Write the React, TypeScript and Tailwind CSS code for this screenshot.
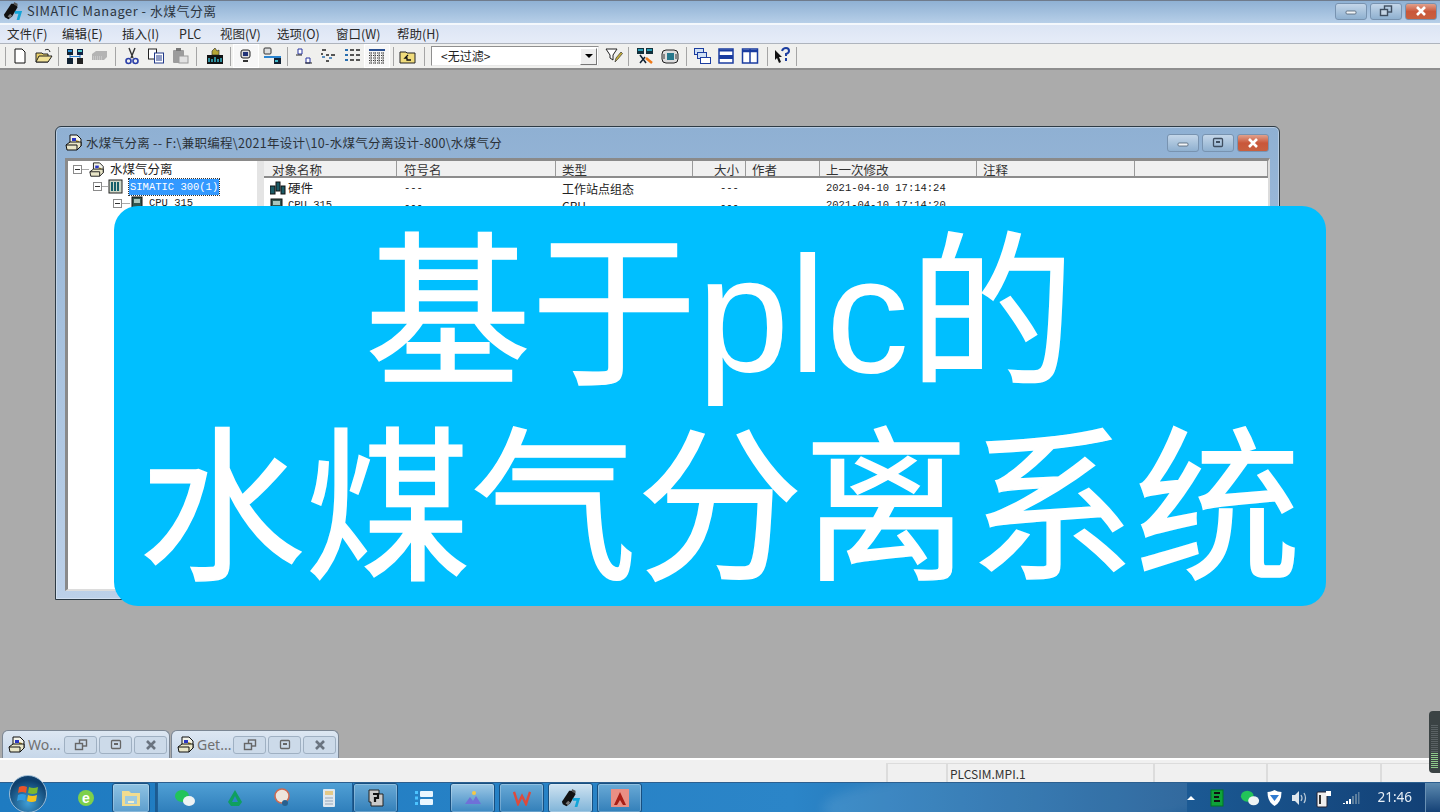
import React from "react";

const cjk = "font-['Noto_Sans_CJK_SC','Noto_Sans',sans-serif]";
const mono = "font-['Liberation_Mono','Noto_Sans_CJK_SC',monospace]";

const SimaticIcon = ({ size = 22 }: { size?: number }) => (
  <svg width={size} height={size} viewBox="0 0 22 22">
    <path d="M1 15l8-12 5 0 2 4-6 10-4 3-4-2z" fill="#111" />
    <path d="M5 17l3-3 2 2-2 3z" fill="#777" />
    <path d="M12 1l4 2 0 3-4-2z" fill="#555" />
    <path d="M13 11h8l-3 10h-3l2-7h-4z" fill="#12a5d8" />
  </svg>
);

const ProjectIcon = ({ size = 18 }: { size?: number }) => (
  <svg width={size} height={size} viewBox="0 0 18 18">
    <path d="M5 1h7l4 4v7H5z" fill="#f3f3e8" stroke="#111" />
    <path d="M7 4h4v3H7z" fill="#2a36c4" />
    <path d="M11 6l3 1v3h-3z" fill="#b99a30" />
    <path d="M1 11l4-3h11v4l-4 4H2z" fill="#e9e6c8" stroke="#111" />
    <path d="M1 11h11v5" fill="none" stroke="#111" />
  </svg>
);

const WinBtn = ({ kind, cls, icon = "#3f4e60" }: { kind: "min" | "max" | "rest" | "close"; cls: string; icon?: string }) => {
  const isClose = kind === "close";
  return (
    <div
      className={`flex items-center justify-center rounded-[3px] border border-[#7893b0] ${cls} ${
        isClose ? "bg-gradient-to-b from-[#e0a08c] via-[#c9573a] to-[#c8603f]" : "bg-gradient-to-b from-[#c4d6e9] via-[#a9c3dc] to-[#8fb0d0]"
      }`}
    >
      <svg width="16" height="12" viewBox="0 0 16 12">
        {kind === "min" && <rect x="3" y="6" width="10" height="3" rx="1" fill="#f2f5f8" stroke="#4d5d70" strokeWidth="0.8" />}
        {kind === "max" && (
          <g fill="none" stroke={icon} strokeWidth="1.300">
            <rect x="3.500" y="1.500" width="9" height="8" rx="1" />
            <path d="M6 5h4" strokeWidth="2" />
          </g>
        )}
        {kind === "rest" && (
          <g fill="none" stroke={icon} strokeWidth="1.400">
            <rect x="6.500" y="1" width="7" height="6" />
            <rect x="2.500" y="4.500" width="7" height="6" fill="#c5d5e5" />
          </g>
        )}
        {isClose && <path d="M4 2l8 8M12 2l-8 8" stroke={icon === "#3f4e60" ? "#fff" : icon} strokeWidth="2.600" />}
      </svg>
    </div>
  );
};

const Sep = ({ cls = "" }: { cls?: string }) => <div className={`h-[19px] w-px shrink-0 bg-[#a5a5a5] ${cls}`} />;

const TBtn = ({ w = "w-[24px]", pressed, children }: { w?: string; pressed?: boolean; children: React.ReactNode }) => (
  <div className={`flex h-[24px] shrink-0 items-center justify-center ${w} ${pressed ? "border border-white bg-[#f7f7f7]" : ""}`}>{children}</div>
);

const I = ({ children }: { children: React.ReactNode }) => (
  <svg width="18" height="18" viewBox="0 0 18 18">
    {children}
  </svg>
);

const Toolbar = () => (
  <div className="flex h-[26px] shrink-0 items-center border-b-2 border-[#8e8e8e] bg-[#f0f0ee]">
    <Sep cls="ml-[5px] mr-[2px]" />
    <TBtn>
      <I><path d="M4 2h7l3 3v11H4z" fill="#fff" stroke="#111" /></I>
    </TBtn>
    <TBtn>
      <I>
        <path d="M1 6h6l1 1h5v8H1z" fill="#e8cf6a" stroke="#222" />
        <path d="M4 9h13l-4 6H1z" fill="#f2e296" stroke="#222" />
        <path d="M10 3q4-2 5 2" fill="none" stroke="#222" />
      </I>
    </TBtn>
    <Sep cls="ml-[2px] mr-[3px]" />
    <TBtn w="w-[25px]">
      <I>
        <rect x="1" y="2" width="6" height="6" fill="#123" /><rect x="11" y="2" width="6" height="6" fill="#124" />
        <rect x="1" y="11" width="6" height="6" fill="#123" /><rect x="11" y="11" width="6" height="6" fill="#222" />
        <rect x="2" y="3" width="4" height="2" fill="#2a8fd0" /><rect x="12" y="3" width="4" height="2" fill="#5cc" />
        <path d="M4 8v3M14 8v3M4 9.500h10" stroke="#2a7fd0" fill="none" />
      </I>
    </TBtn>
    <TBtn>
      <I>
        <path d="M2 7l4-3h11v6l-3 3H2z" fill="#b4b4b4" />
        <path d="M3 10h10M3 12h10" stroke="#dadada" strokeDasharray="1 1" />
      </I>
    </TBtn>
    <Sep cls="ml-[4px] mr-[4px]" />
    <TBtn>
      <I>
        <path d="M6 1l4 10M12 1L8 11" stroke="#333" strokeWidth="1.400" fill="none" />
        <circle cx="5.500" cy="14" r="2.500" fill="none" stroke="#2b3fa8" strokeWidth="1.600" />
        <circle cx="12.500" cy="14" r="2.500" fill="none" stroke="#2b3fa8" strokeWidth="1.600" />
      </I>
    </TBtn>
    <TBtn>
      <I>
        <rect x="1.500" y="2" width="8" height="10" fill="#fff" stroke="#222" />
        <rect x="7.500" y="6" width="9" height="10" fill="#fff" stroke="#223a8a" />
        <path d="M9 9h6M9 11h6M9 13h6" stroke="#223a8a" />
      </I>
    </TBtn>
    <TBtn>
      <I>
        <rect x="2" y="3" width="11" height="13" rx="1" fill="#9c9c9c" />
        <rect x="5" y="1" width="5" height="3" fill="#777" />
        <rect x="8" y="9" width="9" height="7" fill="#e2e2e2" stroke="#9a9a9a" />
      </I>
    </TBtn>
    <Sep cls="ml-[4px] mr-[5px]" />
    <TBtn w="w-[25px]">
      <I>
        <rect x="1" y="8" width="16" height="9" fill="#111" />
        <path d="M9 1l2 3 2-1v5H6V4z" fill="#b6a636" stroke="#222" strokeWidth="0.600" />
        <path d="M3 15v-4M6 15v-3M9 15v-5M12 15v-3M15 15v-4" stroke="#38b6c9" strokeWidth="1.500" />
      </I>
    </TBtn>
    <Sep cls="ml-[3px] mr-[2px]" />
    <TBtn w="w-[26px]" pressed>
      <I>
        <rect x="4" y="3" width="9" height="8" rx="2" fill="#ddd" stroke="#222" />
        <rect x="6" y="5" width="5" height="4" fill="#237" />
        <path d="M6 14h5" stroke="#333" strokeWidth="2" />
      </I>
    </TBtn>
    <TBtn w="w-[26px]">
      <I>
        <rect x="1" y="1" width="7" height="6" rx="1" fill="#ddd" stroke="#333" />
        <path d="M1 10h17" stroke="#2a84d0" strokeWidth="2" />
        <rect x="11" y="11" width="7" height="6" fill="#123" />
        <rect x="12" y="13" width="3" height="2" fill="#4bc" />
      </I>
    </TBtn>
    <Sep cls="ml-[2px] mr-[4px]" />
    <TBtn>
      <I>
        <path d="M3 2h4v5H3zM11 11h4v5h-4z" fill="#fff" stroke="#2634a0" />
        <path d="M1 8h6M10 16h7" stroke="#222" />
      </I>
    </TBtn>
    <TBtn>
      <I>
        <path d="M3 3h2M5 3h2M7 8h3M12 8h4M7 14h3M3 6v2" stroke="#222" strokeWidth="1.500" />
        <path d="M3 10h3M10 11h3" stroke="#2a6fb0" strokeWidth="1.500" />
      </I>
    </TBtn>
    <TBtn>
      <I>
        <path d="M2 3h3M2 8h3M2 13h3" stroke="#2a6fb0" strokeWidth="2" />
        <path d="M7 3h4M13 3h4M7 8h4M13 8h4M7 13h4M13 13h4" stroke="#222" strokeWidth="1.500" />
      </I>
    </TBtn>
    <TBtn w="w-[26px]" pressed>
      <I>
        <path d="M1 3h16" stroke="#2a4f90" strokeWidth="2" />
        <path d="M1 6h16M1 8.500h16M1 11h16M1 13.500h16M1 16h16" stroke="#333" strokeDasharray="1 1" />
        <path d="M3 5v12M7 5v12M11 5v12M15 5v12" stroke="#777" />
      </I>
    </TBtn>
    <Sep cls="ml-[3px] mr-[2px]" />
    <TBtn>
      <I>
        <path d="M1 5h6l1 1h8v10H1z" fill="#f0dc7c" stroke="#222" />
        <path d="M9 8l-3 3h2v2h4" fill="none" stroke="#111" strokeWidth="1.300" />
      </I>
    </TBtn>
    <Sep cls="ml-[4px] mr-[6px]" />
    <div className={`flex h-[20px] w-[168px] shrink-0 items-center justify-between border border-[#8f8f8f] border-r-[#e8e8e8] border-b-[#e8e8e8] bg-white pl-[9px] text-[12px] text-[#222] ${cjk}`}>
      <span>&lt;无过滤&gt;</span>
      <div className="mr-px flex h-[17px] w-[17px] items-center justify-center border border-[#777] border-l-[#fff] border-t-[#fff] bg-[#eeeeee]">
        <div className="h-0 w-0 border-x-[4px] border-t-[4px] border-x-transparent border-t-black" />
      </div>
    </div>
    <TBtn w="w-[27px] ml-[1px]">
      <I>
        <path d="M1 2h11L8 8v5L5 11V8z" fill="#fff" stroke="#222" />
        <path d="M10 15l1-4 5-6 1.500 1.500-5 6z" fill="#c9b23a" stroke="#333" strokeWidth="0.700" />
      </I>
    </TBtn>
    <Sep cls="ml-[1px] mr-[3px]" />
    <TBtn w="w-[25px]">
      <I>
        <rect x="1" y="1" width="7" height="6" fill="#13303a" /><rect x="10" y="1" width="7" height="6" fill="#13303a" />
        <rect x="2" y="2" width="5" height="2" fill="#2ba0b8" /><rect x="11" y="2" width="5" height="2" fill="#2ba0b8" />
        <path d="M4 8l6 8M4 16l5-6" stroke="#123" strokeWidth="1.500" />
        <path d="M10 11l6 5" stroke="#ef7a1a" strokeWidth="2.500" />
      </I>
    </TBtn>
    <TBtn w="w-[25px]">
      <I>
        <rect x="1" y="3" width="16" height="13" rx="4" fill="#ddd" stroke="#222" />
        <rect x="6" y="6" width="7" height="7" fill="#26788c" />
        <path d="M3 7v5M15 7v5" stroke="#333" />
      </I>
    </TBtn>
    <Sep cls="ml-[4px] mr-[3px]" />
    <TBtn>
      <I>
        <rect x="1.500" y="1.500" width="9" height="6" fill="#cfe0f4" stroke="#1b3da0" />
        <rect x="4.500" y="5.500" width="9" height="6" fill="#cfe0f4" stroke="#1b3da0" />
        <rect x="7.500" y="10.500" width="10" height="6" fill="#fff" stroke="#1b3da0" />
      </I>
    </TBtn>
    <TBtn>
      <I>
        <rect x="2" y="2" width="14" height="14" fill="#fff" stroke="#1b3da0" strokeWidth="1.500" />
        <path d="M2 3.500h14M2 9h14M2 11h14" stroke="#1b3da0" strokeWidth="2" />
      </I>
    </TBtn>
    <TBtn>
      <I>
        <rect x="1.500" y="2" width="15" height="14" fill="#fff" stroke="#1b3da0" strokeWidth="1.500" />
        <path d="M1 4h16" stroke="#1b3da0" strokeWidth="2.500" />
        <path d="M9 2v14" stroke="#1b3da0" strokeWidth="1.500" />
      </I>
    </TBtn>
    <Sep cls="ml-[5px] mr-[2px]" />
    <TBtn>
      <I>
        <path d="M2 3l7 7H6l2 5-2 1-2-5-2 2z" fill="#111" />
        <path d="M9 4q1-3 4-3t3 3q0 2-3 3v2" fill="none" stroke="#1b3da0" strokeWidth="2" />
        <rect x="12" y="11" width="2" height="3" fill="#1b3da0" />
      </I>
    </TBtn>
    <Sep cls="ml-[2px]" />
  </div>
);

const Expander = () => (
  <div className="flex h-[9px] w-[9px] shrink-0 items-center justify-center border border-[#8a8a8a] bg-white">
    <div className="h-px w-[5px] bg-[#333]" />
  </div>
);

const columns = [
  { label: "对象名称", w: "w-[133px]", cls: "pl-[8px]" },
  { label: "符号名", w: "w-[159px]", cls: "pl-[7px]" },
  { label: "类型", w: "w-[137px]", cls: "pl-[6px]" },
  { label: "大小", w: "w-[53px]", cls: "pl-[21px]" },
  { label: "作者", w: "w-[74px]", cls: "pl-[6px]" },
  { label: "上一次修改", w: "w-[157px]", cls: "pl-[6px]" },
  { label: "注释", w: "w-[158px]", cls: "pl-[6px]" },
  { label: "", w: "flex-1", cls: "" },
];

const Row = ({ icon, name, type, date }: { icon: React.ReactNode; name: React.ReactNode; type: string; date: string }) => (
  <div className="flex h-[17px] items-center text-[12px] leading-none text-[#222]">
    <div className="flex w-[140px] shrink-0 items-center pl-[6px]">
      <span className="flex w-[18px] justify-start">{icon}</span>
      {name}
    </div>
    <span className={`w-[158px] shrink-0 ${mono} text-[10.500px]`}>---</span>
    <span className={`w-[158px] shrink-0 ${cjk}`}>{type}</span>
    <span className={`w-[106px] shrink-0 ${mono} text-[10.500px]`}>---</span>
    <span className={`${mono} text-[10.500px]`}>{date}</span>
  </div>
);

const ChildWindow = () => (
  <div className="absolute left-[55px] top-[56px] flex h-[474px] w-[1225px] flex-col rounded-t-[6px] border border-[#2d3a44] bg-gradient-to-b from-[#8fb0d3] via-[#a9c3df] to-[#bcd0e8] shadow-[inset_0_0_0_1px_rgba(255,255,255,0.35)]">
    <div className="flex h-[31px] shrink-0 items-center pl-[9px] pr-[10px]">
      <ProjectIcon size={18} />
      <span className={`ml-[3px] mt-[2px] text-[12.500px] tracking-[0.3px] text-[#2b3138] ${cjk}`}>水煤气分离 -- F:\兼职编程\2021年设计\10-水煤气分离设计-800\水煤气分</span>
      <div className="ml-auto flex gap-[3px]">
        <WinBtn kind="min" cls="h-[18px] w-[32px]" />
        <WinBtn kind="max" cls="h-[18px] w-[32px]" />
        <WinBtn kind="close" cls="h-[18px] w-[32px]" />
      </div>
    </div>
    <div className="mx-[9px] mb-[8px] flex min-h-0 flex-1 border-l-[3px] border-t-[3px] border-[#8a8a8a] border-b-2 border-b-[#dcdcdc] border-r-[#dcdcdc] border-r-2 bg-white">
      <div className={`w-[189px] shrink-0 bg-white text-[12.500px] text-[#222] ${cjk}`}>
        <div className="flex h-[17px] items-center pl-[5px]">
          <Expander />
          <div className="h-px w-[7px] bg-[#aaa]" />
          <ProjectIcon size={16} />
          <span className="ml-[5px]">水煤气分离</span>
        </div>
        <div className="flex h-[17px] items-center pl-[25px]">
          <Expander />
          <div className="h-px w-[6px] bg-[#aaa]" />
          <svg width="15" height="15" viewBox="0 0 15 15">
            <rect x="1" y="1" width="13" height="13" fill="#cfd8c8" stroke="#222" />
            <path d="M4 3v9M7 3v9M10 3v9" stroke="#14606a" strokeWidth="2" />
          </svg>
          <span className={`ml-[6px] bg-[#3399ff] px-px text-[10.500px] leading-[16px] text-white outline-1 outline-dotted outline-[#333] ${mono}`}>SIMATIC 300(1)</span>
        </div>
        <div className="flex h-[17px] items-center pl-[45px]">
          <Expander />
          <div className="h-px w-[8px] bg-[#aaa]" />
          <svg width="14" height="15" viewBox="0 0 14 15">
            <rect x="2" y="1" width="10" height="13" fill="#33554f" stroke="#111" />
            <rect x="4" y="3" width="6" height="4" fill="#a9c5bd" />
          </svg>
          <span className={`ml-[5px] text-[10.500px] ${mono}`}>CPU 315</span>
        </div>
      </div>
      <div className="w-[7px] shrink-0 bg-[#e4e4e4]" />
      <div className={`flex min-w-0 flex-1 flex-col ${cjk}`}>
        <div className="flex h-[17px] shrink-0 border-b-2 border-[#8c8c8c] bg-[#f0f0f0]">
          {columns.map((c, i) => (
            <div key={i} className={`${c.w} ${c.cls} shrink-0 border-r border-[#9a9a9a] text-[12.500px] leading-[17px] text-[#333]`}>
              {c.label}
            </div>
          ))}
        </div>
        <div className="pt-[2px]">
          <Row
            icon={
              <svg width="16" height="15" viewBox="0 0 16 15">
                <rect x="0" y="5" width="5" height="8" fill="#1c5b66" stroke="#111" />
                <rect x="6" y="1" width="4" height="9" fill="#1c5b66" stroke="#111" />
                <rect x="11" y="5" width="4" height="8" fill="#1c5b66" stroke="#111" />
              </svg>
            }
            name={<span className={`text-[12.500px] ${cjk}`}>硬件</span>}
            type="工作站点组态"
            date="2021-04-10 17:14:24"
          />
          <Row
            icon={
              <svg width="14" height="15" viewBox="0 0 14 15">
                <rect x="1" y="1" width="11" height="13" fill="#33554f" stroke="#111" />
                <rect x="3" y="3" width="7" height="4" fill="#a9c5bd" />
              </svg>
            }
            name={<span className={`text-[10.500px] ${mono}`}>CPU 315</span>}
            type="CPU"
            date="2021-04-10 17:14:20"
          />
        </div>
      </div>
    </div>
  </div>
);

const Minimized = ({ title }: { title: string }) => (
  <div className="flex h-[28px] w-[168px] items-center rounded-t-[6px] border border-b-0 border-[#7c8794] bg-gradient-to-b from-[#dde7f2] to-[#c7d7e9] pl-[5px]">
    <ProjectIcon size={18} />
    <span className="ml-[2px] w-[36px] font-['Noto_Sans',sans-serif] text-[14px] text-[#707070]">{title}</span>
    <div className="flex gap-[2px]">
      <WinBtn kind="rest" icon="#666" cls="h-[18px] w-[33px] !bg-none bg-[#ccdae9] !border-[#9fb0c2]" />
      <WinBtn kind="max" icon="#666" cls="h-[18px] w-[33px] !bg-none bg-[#ccdae9] !border-[#9fb0c2]" />
      <WinBtn kind="close" icon="#6a7480" cls="h-[18px] w-[33px] !bg-none !bg-[#ccdae9] !border-[#9fb0c2]" />
    </div>
  </div>
);

const TaskBtn = ({ cls, active, children }: { cls: string; active?: boolean; children: React.ReactNode }) => (
  <div
    className={`flex h-[30px] shrink-0 items-center justify-center rounded-[3px] border border-[#174f80] shadow-[inset_0_0_0_1px_rgba(255,255,255,0.25)] ${cls} ${
      active ? "bg-gradient-to-b from-[#cfe3f1] to-[#7fb4d8]" : "bg-gradient-to-b from-[#69aad6] to-[#327fb9]"
    }`}
  >
    {children}
  </div>
);

const WeChat = ({ s = 22 }: { s?: number }) => (
  <svg width={s} height={s} viewBox="0 0 22 22">
    <ellipse cx="8" cy="9" rx="7" ry="6" fill="#22c45a" />
    <ellipse cx="15" cy="14" rx="6" ry="5" fill="#eef3f4" />
  </svg>
);

const Taskbar = () => (
  <div className="flex h-[30px] shrink-0 items-center border-t border-[#2c5f8f] bg-gradient-to-r from-[#1e7bc1] via-[#2b85c8] via-55% to-[#123f74]">
    <div className="relative ml-[9px] flex h-[30px] w-[38px] shrink-0 items-center justify-center">
      <div className="absolute -top-[8px] flex h-[38px] w-[38px] items-center justify-center rounded-full border border-[#9bbad3] bg-[radial-gradient(circle_at_50%_75%,#3f9ed6,#0e3f6c_70%)]">
        <svg width="24" height="24" viewBox="0 0 24 24">
          <path d="M3 5q4-2 8 0l-1 6q-4-2-8 0z" fill="#e8542a" />
          <path d="M13 5q4 2 9 0l-1 6q-4 2-9 0z" fill="#7cb82f" />
          <path d="M2 13q4-2 8 0l-1 6q-4-2-8 0z" fill="#2f9be0" />
          <path d="M12 13q4 2 9 0l-1 6q-4 2-9 0z" fill="#f6c21c" />
        </svg>
      </div>
    </div>
    <div className="ml-[20px] flex w-[38px] shrink-0 justify-center">
      <div className="flex h-[16px] w-[16px] items-center justify-center rounded-full bg-[#7fd04a] font-['Liberation_Sans',sans-serif] text-[14px] font-bold leading-none text-white">e</div>
    </div>
    <TaskBtn cls="ml-[7px] w-[38px] !from-[#8fc3e3] !to-[#5d9ecd]">
      <svg width="20" height="18" viewBox="0 0 20 18">
        <path d="M1 2h7l2 2h9v13H1z" fill="#f2dc8f" />
        <rect x="4" y="7" width="12" height="8" fill="#9fcbe0" />
        <rect x="7" y="12" width="6" height="2" fill="#f7efc6" />
      </svg>
    </TaskBtn>
    <div className="ml-[5px] h-[30px] w-[2px] shrink-0 bg-[#1c5b90]" />
    <div className="flex h-[30px] w-[196px] shrink-0 items-center justify-around border-x border-[#1f5e96] bg-gradient-to-b from-[#50a0d5] to-[#2d7dba] px-[2px]">
      <WeChat />
      <svg width="20" height="20" viewBox="0 0 20 20">
        <path d="M10 2l7 12-3 4H6l-3-4z" fill="#0f9f5f" />
        <path d="M10 8l3 6H7z" fill="#2b85c8" />
      </svg>
      <svg width="20" height="20" viewBox="0 0 20 20">
        <circle cx="9" cy="8" r="7" fill="#eee6dc" stroke="#d06a50" strokeWidth="1.500" />
        <circle cx="12" cy="15" r="3" fill="#28608f" />
      </svg>
      <svg width="14" height="20" viewBox="0 0 14 20">
        <rect x="1" y="1" width="12" height="18" rx="1" fill="#dfe8ef" />
        <rect x="3" y="3" width="8" height="4" fill="#e3c987" />
        <path d="M3 10h8M3 13h8M3 16h8" stroke="#aebccb" strokeWidth="1.500" />
      </svg>
    </div>
    <TaskBtn cls="w-[45px]">
      <svg width="20" height="20" viewBox="0 0 20 20">
        <path d="M3 2h10v4h4v12H5v-4H3z" fill="#c9c9c9" stroke="#222" />
        <path d="M7 6h5v4H9v4" fill="none" stroke="#111" strokeWidth="2.200" />
      </svg>
    </TaskBtn>
    <TaskBtn cls="ml-[1px] w-[49px] !border-transparent !bg-none !shadow-none">
      <svg width="20" height="18" viewBox="0 0 20 18">
        <rect x="6" y="2" width="13" height="6" rx="1" fill="#e9f6ff" />
        <rect x="6" y="10" width="13" height="6" rx="1" fill="#e9f6ff" />
        <rect x="1" y="2" width="3" height="3" fill="#4cc3ff" />
        <rect x="1" y="7.500" width="3" height="3" fill="#4cc3ff" />
        <rect x="1" y="13" width="3" height="3" fill="#4cc3ff" />
      </svg>
    </TaskBtn>
    <TaskBtn cls="ml-[2px] w-[45px] !from-[#9dc9e6] !to-[#3b88c2]">
      <svg width="18" height="18" viewBox="0 0 18 18">
        <circle cx="10" cy="4" r="2" fill="#f6c944" />
        <path d="M1 15l5-7 3 4 3-5 5 8z" fill="#6f70d8" />
      </svg>
    </TaskBtn>
    <TaskBtn cls="ml-[4px] w-[45px]">
      <svg width="18" height="16" viewBox="0 0 18 16">
        <path d="M1 2l4 12 4-8 4 8 4-12" fill="none" stroke="#dd4a3c" strokeWidth="2.400" />
      </svg>
    </TaskBtn>
    <TaskBtn cls="ml-[4px] w-[45px]" active>
      <SimaticIcon size={20} />
    </TaskBtn>
    <TaskBtn cls="ml-[4px] w-[45px]">
      <svg width="18" height="18" viewBox="0 0 18 18">
        <rect x="0" y="0" width="18" height="18" fill="#ea8f84" />
        <path d="M9 3L3 16h3l3-5 3 5h3z" fill="#a81f16" />
      </svg>
    </TaskBtn>
    <div className="relative h-[30px] flex-1 overflow-hidden">
      <div className="absolute -top-[20px] left-[180px] h-[70px] w-[420px] -rotate-3 rounded-[50%] bg-white/10 blur-[6px]" />
    </div>
    <div className="flex h-[30px] items-center">
      <div className="h-0 w-0 border-x-[4px] border-b-[4px] border-x-transparent border-b-white" />
      <svg className="ml-[14px]" width="18" height="18" viewBox="0 0 18 18">
        <rect x="2" y="1" width="12" height="16" fill="#0fa23a" stroke="#072" />
        <path d="M5 4h6M5 8h5M5 12h6" stroke="#111" strokeWidth="2" />
      </svg>
      <span className="ml-[13px]"><WeChat s={20} /></span>
      <svg className="ml-[6px]" width="17" height="18" viewBox="0 0 17 18">
        <path d="M8.500 1q3 2 7 2 0 10-7 14Q1.500 13 1.500 3q4 0 7-2z" fill="#fff" />
        <path d="M4 6h9l-4.500 6z" fill="#2f7ad0" />
      </svg>
      <svg className="ml-[8px]" width="17" height="16" viewBox="0 0 17 16">
        <path d="M1 5h3l4-4v14l-4-4H1z" fill="#dfe7ee" />
        <path d="M10 5q2 3 0 6M13 3q3 5 0 10" fill="none" stroke="#b8c8d6" strokeWidth="1.300" />
      </svg>
      <svg className="ml-[7px]" width="18" height="20" viewBox="0 0 18 20">
        <rect x="2" y="4" width="10" height="15" rx="1" fill="#eee" stroke="#223" />
        <path d="M5 7v9" stroke="#333" strokeWidth="2" />
        <path d="M11 3h5v5h-5z" fill="#fff" />
      </svg>
      <svg className="ml-[9px]" width="18" height="14" viewBox="0 0 18 14">
        <path d="M1 12h2v1H1zM4 10h2v3H4zM7 8h2v5H7z" fill="#fff" />
        <path d="M10 5h2v8h-2zM13 3h2v10h-2zM16 1h1.500v12H16z" fill="#5d7f9e" />
      </svg>
      <span className="ml-[17px] mr-[13px] font-['Noto_Sans',sans-serif] text-[13.500px] text-[#e6eef6]">21:46</span>
      <div className="h-[30px] w-[15px] border-l border-[#6a91b4] bg-gradient-to-b from-[#5d8bb0] to-[#123f74]" />
    </div>
  </div>
);

const StatusCell = ({ cls, children }: { cls: string; children?: React.ReactNode }) => (
  <div className={`h-[19px] border-l-2 border-t border-[#dcdcdc] pl-[1px] text-[12px] leading-[19px] text-[#333] ${cls}`}>{children}</div>
);

const menus = [
  { label: "文件(F)", w: "w-[55px]" },
  { label: "编辑(E)", w: "w-[60px]" },
  { label: "插入(I)", w: "w-[57px]" },
  { label: "PLC", w: "w-[41px]" },
  { label: "视图(V)", w: "w-[57px]" },
  { label: "选项(O)", w: "w-[59px]" },
  { label: "窗口(W)", w: "w-[61px]" },
  { label: "帮助(H)", w: "w-[60px]" },
];

export default function App() {
  return (
    <div className="relative h-[812px] w-[1440px] overflow-hidden">
      <div className="flex h-full flex-col blur-[0.4px]">
        {/* main window frame */}
        <div className="flex h-[23px] shrink-0 items-center border-t-1 border-[#6f7b8c] bg-gradient-to-b from-[#8fb1d4] to-[#b7cfe8] pb-[2px] pl-[3px] pr-[3px]">
          <SimaticIcon size={20} />
          <span className={`ml-[4px] text-[12.800px] tracking-[0.55px] text-[#2c3540] ${cjk}`}>SIMATIC Manager - 水煤气分离</span>
          <div className="ml-auto flex gap-[3px]">
            <WinBtn kind="min" cls="h-[17px] w-[32px]" />
            <WinBtn kind="rest" cls="h-[17px] w-[32px]" />
            <WinBtn kind="close" cls="h-[17px] w-[32px]" />
          </div>
        </div>
        <div className={`flex h-[21px] shrink-0 items-center border-t-2 border-b border-t-[#f4f8fc] border-b-[#aeb4bd] bg-gradient-to-b from-[#dce5f4] to-[#e6ecf8] pl-[7px] text-[12.500px] text-[#2a2a2a] ${cjk}`}>
          {menus.map((m) => (
            <span key={m.label} className={m.w}>
              {m.label}
            </span>
          ))}
        </div>
        <Toolbar />
        <div className="relative flex min-h-0 flex-1 items-end gap-px bg-[#ababab] pl-[2px]">
          <ChildWindow />
          <Minimized title="Wo..." />
          <Minimized title="Get..." />
          <div className="absolute bottom-[-15px] right-0 z-10 flex h-[62px] w-[11px] flex-col justify-end gap-px rounded-l-[4px] bg-[#3b4344] px-[2px] pb-[5px]">
            {Array.from({ length: 22 }).map((_, i) => (
              <div key={i} className={`h-px ${i > 13 ? "bg-[#8fc98a]" : "bg-[#5a6264]"}`} />
            ))}
          </div>
        </div>
        <div className={`flex h-[24px] shrink-0 items-end border-t-2 border-white bg-[#f0f0f0] pl-[886px] ${cjk}`}>
          <StatusCell cls="w-[60px]" />
          <StatusCell cls="w-[207px] pl-[2px]">PLCSIM.MPI.1</StatusCell>
          <StatusCell cls="w-[113px]" />
          <StatusCell cls="w-[114px]" />
          <StatusCell cls="flex-1" />
        </div>
        <Taskbar />
      </div>
      {/* banner over the screenshot */}
      <div className={`absolute left-[114px] top-[206px] flex h-[400px] w-[1212px] items-center justify-center rounded-[24px] bg-[#00bfff] text-center text-[166px] leading-[195px] text-white [-webkit-text-stroke:1.500px_white] ${cjk}`}>
        <div className="-mt-[18px]">
          基于<span className="font-['Liberation_Sans',sans-serif] leading-[0] [-webkit-text-stroke:0]">plc</span>的
          <br />
          水煤气分离系统
        </div>
      </div>
    </div>
  );
}
